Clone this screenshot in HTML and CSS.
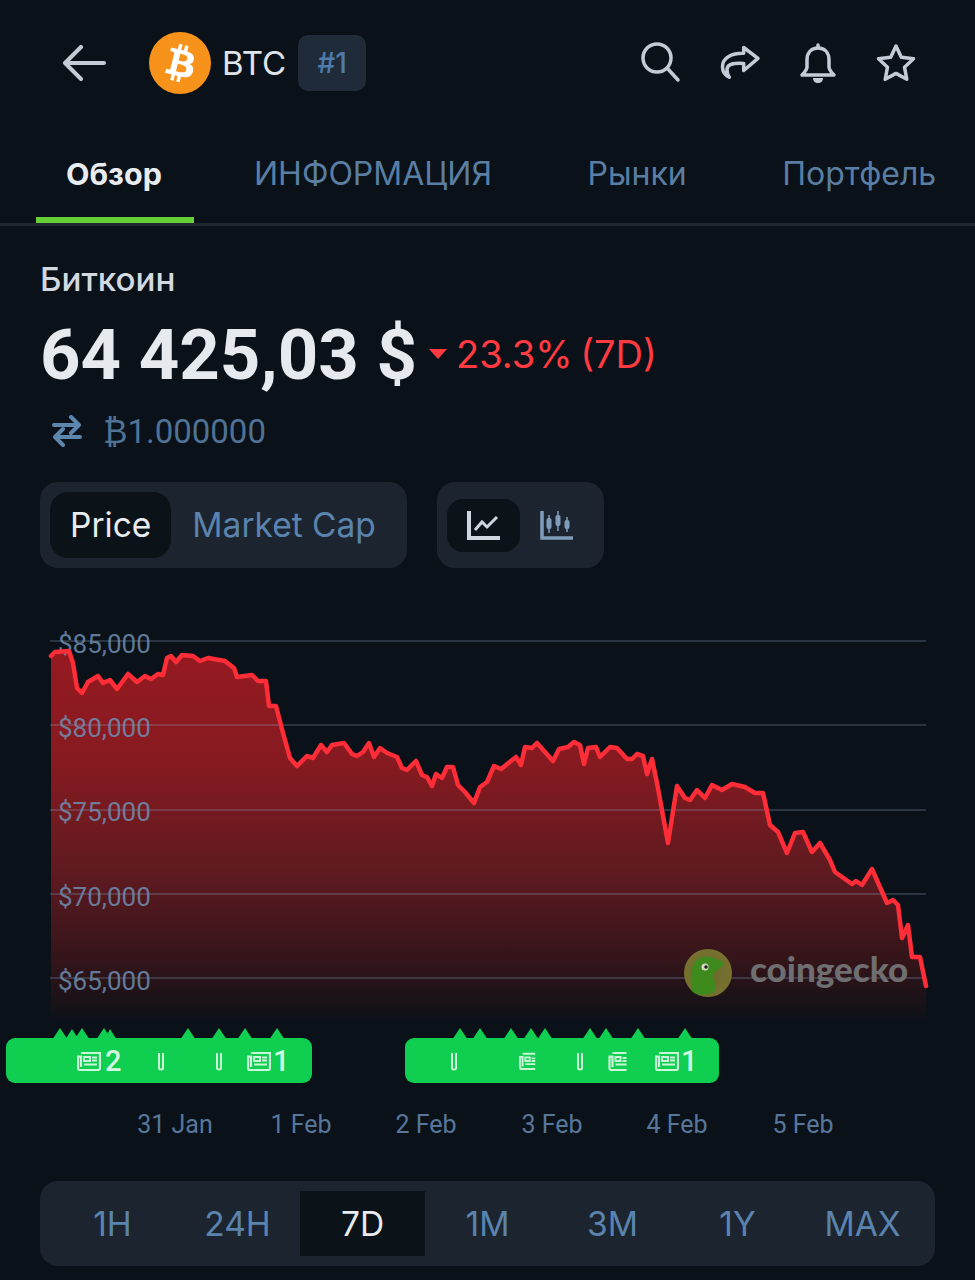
FILE: index.html
```html
<!DOCTYPE html>
<html lang="en">

<head>
    <meta charset="UTF-8">
    <meta name="viewport" content="width=device-width, initial-scale=1.0">
    <title>BTC</title>
    <link rel="stylesheet" href="styles.css">
</head>

<body>
    <svg class="defs" width="0" height="0">
        <symbol id="news" viewBox="0 0 24 20">
            <path d="M4 2h19v15a2 2 0 0 1-2 2H3a2 2 0 0 1-2-2V5.500h3V16" fill="none" stroke="#c9f7d8" stroke-width="2.200" />
            <path d="M7 6h6v4H7zM15 6.500h5M15 9.500h5M7 13.500h13" fill="none" stroke="#c9f7d8" stroke-width="2" />
        </symbol>
        <symbol id="clip" viewBox="0 0 8 20">
            <path d="M2 2v15q0 1.500 2 1.500t2-1.500V2" fill="none" stroke="#c9f7d8" stroke-width="2" />
        </symbol>
        <symbol id="news-half" viewBox="0 0 20 20">
            <path d="M4 2h14M18 19H3a2 2 0 0 1-2-2V5.500h3V16" fill="none" stroke="#c9f7d8" stroke-width="2.200" />
            <path d="M7 6h5v4H7zM14 7h4M14 10h4M7 13.500h11" fill="none" stroke="#c9f7d8" stroke-width="2" />
        </symbol>
    </svg>

    <header class="top-bar">
        <svg class="back-icon" viewBox="0 0 44 36">
            <path d="M42 18H3M19 2 3 18l16 16" />
        </svg>
        <svg class="coin" viewBox="0 0 32 32">
            <circle cx="16" cy="16" r="16" fill="#f7931a" />
            <path fill="#fff" d="M23.189 14.02c.314-2.096-1.283-3.223-3.465-3.975l.708-2.84-1.728-.43-.69 2.765c-.454-.114-.92-.22-1.385-.326l.695-2.783L15.596 6l-.708 2.839c-.376-.086-.746-.17-1.104-.26l.002-.009-2.384-.595-.46 1.846s1.283.294 1.256.312c.7.175.826.638.805 1.006l-.806 3.235c.048.012.11.03.18.057l-.183-.045-1.13 4.532c-.086.212-.303.531-.793.41.018.025-1.256-.313-1.256-.313l-.858 1.978 2.25.561c.418.105.828.215 1.231.318l-.715 2.872 1.727.43.708-2.84c.472.127.93.245 1.378.357l-.706 2.828 1.728.43.715-2.866c2.948.558 5.164.333 6.097-2.333.752-2.146-.037-3.385-1.588-4.192 1.13-.26 1.98-1.003 2.207-2.538zm-3.95 5.538c-.533 2.147-4.148.986-5.32.695l.95-3.805c1.172.293 4.929.872 4.37 3.11zm.535-5.569c-.487 1.953-3.495.96-4.47.717l.86-3.45c.975.243 4.118.696 3.61 2.733z" />
        </svg>
        <span class="symbol">BTC</span>
        <span class="rank">#1</span>
        <div class="top-icons">
            <svg class="top-icon" viewBox="0 0 42 42">
                <circle cx="16" cy="16" r="14" />
                <path d="M26.500 26.500 37 38" />
            </svg>
            <svg class="top-icon" viewBox="0 0 42 42">
                <path d="M24.700 5.500 39 16.300 24.700 28.500V21.500C17 21 9 21 8 27c-.3 3 1 6 2.300 8.300C6 33 3.500 29 3.500 24.700 3.500 15 14 11 24.700 11.300z" />
            </svg>
            <svg class="top-icon" viewBox="0 0 42 42">
                <path d="M21 3v3M21 6c-7 0-11 5-11 12v7c0 3-2 5-5 8h32c-3-3-5-5-5-8v-7c0-7-4-12-11-12z" />
                <path class="solid" d="M16 36h10c0 3-2 5-5 5s-5-2-5-5z" />
            </svg>
            <svg class="top-icon" viewBox="0 0 42 42">
                <path d="m21 4 5.300 11.200 12.200 1.600-9 8.400 2.300 12.100L21 31.400l-10.800 5.900 2.300-12.100-9-8.400 12.200-1.600z" />
            </svg>
        </div>
    </header>

    <nav class="tabs">
        <div class="tab active">Обзор</div>
        <div class="tab">ИНФОРМАЦИЯ</div>
        <div class="tab">Рынки</div>
        <div class="tab">Портфель</div>
    </nav>

    <section class="summary">
        <div class="coin-name">Биткоин</div>
        <div class="price-row">
            <span class="price">64 425,03 $</span>
            <span class="arrow-down"></span>
            <span class="change">23.3% (7D)</span>
        </div>
        <div class="convert-row">
            <svg class="swap-icon" viewBox="0 0 30 32">
                <path d="M2 10h25M19 2l8 8-8 8M28 22H3M11 14l-8 8 8 8" />
            </svg>
            <span>₿1.000000</span>
        </div>
    </section>

    <section class="toggles">
        <div class="toggle-group">
            <div class="toggle-item on">Price</div>
            <div class="toggle-item">Market Cap</div>
        </div>
        <div class="toggle-group icons">
            <div class="toggle-icon on">
                <svg viewBox="0 0 36 32" width="36" height="32">
                    <path d="M3 2v27h31" fill="none" stroke="#cfd6de" stroke-width="4" />
                    <path d="m9 21 7-8 5 5 10-10" fill="none" stroke="#cfd6de" stroke-width="3" />
                </svg>
            </div>
            <div class="toggle-icon">
                <svg viewBox="0 0 36 32" width="36" height="32">
                    <path d="M3 2v27h31" fill="none" stroke="#7f9cbb" stroke-width="3.500" />
                    <path d="M10 6v18M19 2v20M28 8v15" stroke="#7f9cbb" stroke-width="1.500" />
                    <rect x="7.500" y="9" width="5" height="11" rx="2" fill="#7f9cbb" />
                    <rect x="16.500" y="6" width="5" height="11" rx="2" fill="#7f9cbb" />
                    <rect x="25.500" y="11" width="5" height="9" rx="2" fill="#7f9cbb" />
                </svg>
            </div>
        </div>
    </section>

    <svg class="chart" viewBox="0 620 975 540" width="975" height="540">
        <defs>
            <linearGradient id="area-fill" x1="0" y1="650" x2="0" y2="1022" gradientUnits="userSpaceOnUse">
                <stop offset="0" stop-color="#951a20" />
                <stop offset="0.3" stop-color="#861a20" />
                <stop offset="0.6" stop-color="#5e1a20" />
                <stop offset="0.85" stop-color="#301419" />
                <stop offset="1" stop-color="#0b1117" />
            </linearGradient>
            <radialGradient id="gecko-ring" cx="0.5" cy="0.5" r="0.5">
                <stop offset="0" stop-color="#6b6a2e" />
                <stop offset="1" stop-color="#77702f" />
            </radialGradient>
        </defs>

        <path class="area" d="M51 656L55 652 69 651 73 663 77 688 82 693 88 682 98 676 103 683 110 680 117 689 128 674 137 682 145 676 151 679 158 674 163 675 167 658 171 656 176 662 182 655 193 656 200 661 208 658 225 661 234 668 237 677 252 675 258 681 266 681 269 706 276 706 283 733 290 758 297 766 307 756 313 758 321 745 327 752 332 745 344 743 352 754 357 756 363 752 369 743 374 757 380 748 387 753 397 757 402 768 407 770 416 761 422 775 427 777 432 786 436 774 442 778 447 767 453 767 458 785 465 792 474 803 480 787 487 782 494 766 501 769 516 757 521 765 525 747 532 748 537 743 553 761 559 749 568 747 574 742 580 745 584 764 588 748 596 747 600 757 610 747 617 748 627 759 632 759 637 754 643 756 647 774 652 759 657 783 668 843 677 786 685 798 690 800 697 790 705 798 712 785 722 790 732 784 745 787 755 793 763 793 770 825 778 832 787 853 795 833 803 832 812 852 820 843 830 860 835 872 852 884 856 881 862 885 872 869 887 903 893 900 898 905 902 938 908 925 912 957 920 957 926 986V1022H51z" />

        <g class="grid">
            <path d="M50 641H926M50 725H926M50 810H926M50 894H926M50 978H926" />
        </g>
        <g class="axis-y">
            <text x="58" y="653">$85,000</text>
            <text x="58" y="737">$80,000</text>
            <text x="58" y="821">$75,000</text>
            <text x="58" y="906">$70,000</text>
            <text x="58" y="990">$65,000</text>
        </g>

        <path class="line" d="M51 656L55 652 69 651 73 663 77 688 82 693 88 682 98 676 103 683 110 680 117 689 128 674 137 682 145 676 151 679 158 674 163 675 167 658 171 656 176 662 182 655 193 656 200 661 208 658 225 661 234 668 237 677 252 675 258 681 266 681 269 706 276 706 283 733 290 758 297 766 307 756 313 758 321 745 327 752 332 745 344 743 352 754 357 756 363 752 369 743 374 757 380 748 387 753 397 757 402 768 407 770 416 761 422 775 427 777 432 786 436 774 442 778 447 767 453 767 458 785 465 792 474 803 480 787 487 782 494 766 501 769 516 757 521 765 525 747 532 748 537 743 553 761 559 749 568 747 574 742 580 745 584 764 588 748 596 747 600 757 610 747 617 748 627 759 632 759 637 754 643 756 647 774 652 759 657 783 668 843 677 786 685 798 690 800 697 790 705 798 712 785 722 790 732 784 745 787 755 793 763 793 770 825 778 832 787 853 795 833 803 832 812 852 820 843 830 860 835 872 852 884 856 881 862 885 872 869 887 903 893 900 898 905 902 938 908 925 912 957 920 957 926 986" />

        <g class="gecko">
            <circle cx="708" cy="973" r="24" fill="url(#gecko-ring)" />
            <path d="M692 991c-2-10-2-20 1-26 3-7 10-9 16-8 5 0 8 3 12 4 3 1 3 4 0 6-3 3-6 3-7 7-1 6 2 10 2 15-1 3-7 6-12 6-5 0-10-1-12-4z" fill="#3f8a1c" />
            <circle cx="705" cy="967" r="3.500" fill="#d8d8c8" />
            <circle cx="706" cy="967" r="1.800" fill="#222" />
            <text class="gecko-text" x="750" y="982">coingecko</text>
        </g>

        <g class="markers">
            <path d="M52 1040l8-12 8 12zM65 1040l7-11 7 11zM74 1040l8-12 8 12zM96 1040l8-12 8 12zM104 1040l6-11 7 11zM180 1040l8-12 8 12zM211 1040l8-12 8 12zM237 1040l8-12 8 12zM269 1040l8-12 8 12z" />
            <path d="M452 1040l8-12 8 12zM472 1040l8-12 8 12zM503 1040l8-12 8 12zM523 1040l8-12 8 12zM537 1040l8-12 8 12zM582 1040l8-12 8 12zM598 1040l8-12 8 12zM630 1040l8-12 8 12zM677 1040l8-12 8 12z" />
            <rect x="6" y="1038" width="306" height="45" rx="9" />
            <rect x="405" y="1038" width="314" height="45" rx="9" />
        </g>
        <use href="#news" x="77" y="1051" width="24" height="20" />
        <text class="marker-num" x="105" y="1071">2</text>
        <use href="#clip" x="157" y="1051" width="8" height="20" />
        <use href="#clip" x="215" y="1051" width="8" height="20" />
        <use href="#news" x="247" y="1051" width="24" height="20" />
        <text class="marker-num" x="273" y="1071">1</text>
        <use href="#clip" x="450" y="1051" width="8" height="20" />
        <use href="#news-half" x="519" y="1051" width="18" height="20" />
        <use href="#clip" x="576" y="1051" width="8" height="20" />
        <use href="#news-half" x="608" y="1051" width="21" height="20" />
        <use href="#news" x="655" y="1051" width="24" height="20" />
        <text class="marker-num" x="681" y="1071">1</text>

        <g class="axis-x">
            <text x="175" y="1133">31 Jan</text>
            <text x="301" y="1133">1 Feb</text>
            <text x="426" y="1133">2 Feb</text>
            <text x="552" y="1133">3 Feb</text>
            <text x="677" y="1133">4 Feb</text>
            <text x="803" y="1133">5 Feb</text>
        </g>
    </svg>

    <div class="range-bar">
        <div class="range-item">1H</div>
        <div class="range-item">24H</div>
        <div class="range-item on">7D</div>
        <div class="range-item">1M</div>
        <div class="range-item">3M</div>
        <div class="range-item">1Y</div>
        <div class="range-item">MAX</div>
    </div>
</body>

</html>
```

FILE: styles.css
```css
* {
    padding: 0;
    margin: 0;
    box-sizing: border-box;
}

html,
body {
    height: 1280px;
    overflow: hidden;
}

body {
    background-color: #0a1118;
    font-family: Inter, "Noto Sans", sans-serif;
    color: #e8ecf0;
}

.defs {
    position: absolute;
}

.top-bar {
    display: flex;
    align-items: center;
    height: 126px;
    padding-left: 62px;
}

.back-icon {
    width: 44px;
    height: 36px;
    fill: none;
    stroke: #c3ccd6;
    stroke-width: 4;
    stroke-linecap: round;
    stroke-linejoin: round;
}

.coin {
    width: 62px;
    height: 62px;
    margin-left: 43px;
}

.symbol {
    margin-left: 11px;
    font-size: 33px;
    color: #dfe4ea;
}

.rank {
    display: flex;
    align-items: center;
    justify-content: center;
    width: 68px;
    height: 56px;
    margin-left: 12px;
    border-radius: 10px;
    background-color: #1f2b38;
    font-size: 28px;
    font-weight: 500;
    color: #4f7bab;
}

.top-icons {
    display: flex;
    gap: 36px;
    margin-left: auto;
    padding-right: 58px;
}

.top-icon {
    width: 42px;
    height: 42px;
    fill: none;
    stroke: #c3ccd6;
    stroke-width: 3.5;
    stroke-linecap: round;
    stroke-linejoin: round;
}

.top-icon .solid {
    fill: #c3ccd6;
    stroke: none;
}

.tabs {
    display: flex;
    height: 100px;
    padding-left: 36px;
    border-bottom: 3px solid #20282f;
    white-space: nowrap;
    overflow: hidden;
}

.tab {
    flex-shrink: 0;
    height: 97px;
    padding: 27px 30px 0;
    margin-right: 35.5px;
    font-size: 32px;
    line-height: 42px;
    color: #5a7ea3;
}

.tab.active {
    width: 158px;
    margin-right: 30px;
    border-bottom: 6px solid #66d136;
    font-size: 30.5px;
    font-weight: 700;
    color: #e8ecf0;
}

.summary {
    padding: 33px 0 0 40px;
}

.coin-name {
    font-size: 33.2px;
    font-weight: 500;
    line-height: 40px;
    color: #d3d9e0;
}

.price-row {
    display: flex;
    align-items: center;
    height: 84px;
    margin-top: 13px;
}

.price {
    font-family: Roboto, sans-serif;
    font-size: 70.7px;
    font-weight: 700;
    color: #e6eaef;
}

.arrow-down {
    width: 0;
    height: 0;
    margin: 0 9px 0 12px;
    border-top: 10px solid #ff3b41;
    border-left: 9px solid transparent;
    border-right: 9px solid transparent;
}

.change {
    font-size: 38px;
    word-spacing: -3px;
    color: #ff3b41;
}

.convert-row {
    display: flex;
    align-items: center;
    height: 50px;
    margin-top: 10px;
    padding-left: 12px;
    font-family: Roboto, "DejaVu Sans", sans-serif;
    font-size: 33px;
    color: #4f7295;
}

.swap-icon {
    width: 30px;
    height: 32px;
    margin-right: 21px;
    fill: none;
    stroke: #5d86ae;
    stroke-width: 4;
    stroke-linecap: round;
    stroke-linejoin: round;
}

.toggles {
    display: flex;
    gap: 30px;
    margin-top: 26px;
    padding-left: 40px;
}

.toggle-group {
    display: flex;
    align-items: center;
    height: 86px;
    padding: 0 10px;
    border-radius: 18px;
    background-color: #1c252f;
}

.toggle-item {
    display: flex;
    align-items: center;
    height: 66px;
    padding: 0 21px;
    border-radius: 18px;
    font-size: 33.5px;
    color: #5a83ad;
}

.toggle-item.on {
    padding: 0 20px;
    background-color: #0b1218;
    color: #e8ecf0;
}

.toggle-icon {
    display: flex;
    align-items: center;
    justify-content: center;
    width: 73.5px;
    height: 53px;
    border-radius: 16px;
}

.toggle-icon.on {
    background-color: #0b1218;
}

.chart {
    display: block;
    margin-top: 52px;
}

.area {
    fill: url(#area-fill);
}

.grid path {
    fill: none;
    stroke: #8aa0bd;
    stroke-opacity: 0.26;
    stroke-width: 2;
}

.axis-y text {
    font-family: Roboto, sans-serif;
    font-size: 26px;
    fill: #6f8eb0;
    fill-opacity: 0.85;
}

.axis-x text {
    font-family: Roboto, sans-serif;
    font-size: 25px;
    fill: #57779a;
    text-anchor: middle;
}

.line {
    fill: none;
    stroke: #ff2d38;
    stroke-width: 4.5;
    stroke-linejoin: round;
    stroke-linecap: round;
}

.gecko-text {
    font-family: Lato, sans-serif;
    font-size: 35px;
    font-weight: 900;
    fill: #6f6e70;
}

.markers path,
.markers rect {
    fill: #0fce50;
}

.marker-num {
    font-family: Roboto, sans-serif;
    font-size: 29px;
    font-weight: 500;
    fill: #d3f8e0;
}

.range-bar {
    display: flex;
    align-items: center;
    height: 85px;
    margin: 21px 40px 0;
    padding: 0 10px;
    border-radius: 18px;
    background-color: #1c252f;
}

.range-item {
    display: flex;
    align-items: center;
    justify-content: center;
    width: 125px;
    height: 65px;
    font-size: 33.5px;
    color: #5a83ad;
}

.range-item.on {
    background-color: #0b1218;
    color: #e8ecf0;
}
```
